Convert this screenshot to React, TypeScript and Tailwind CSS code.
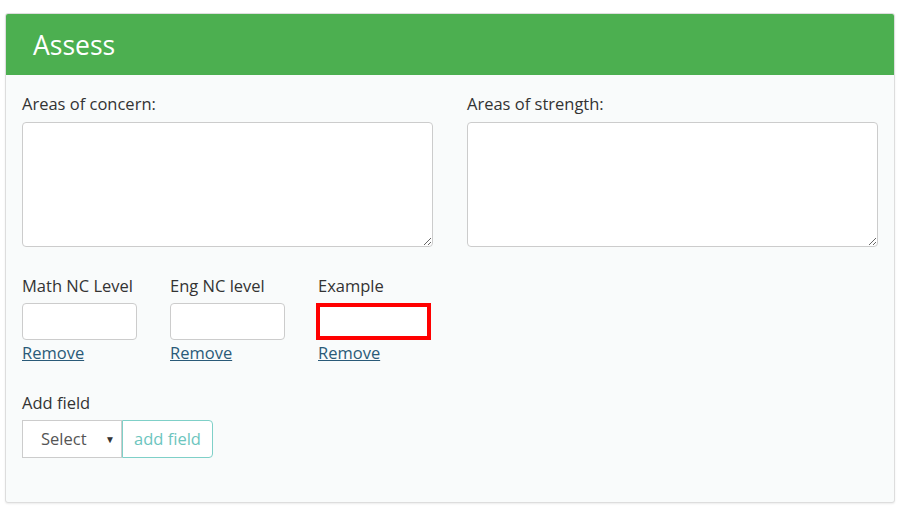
import React from "react";

const font = { fontFamily: '"Open Sans", "Noto Sans", sans-serif' };

function SmallField({ label, red }: { label: string; red?: boolean }) {
  return (
    <div className="flex w-[115px] flex-col">
      <div className="h-[24px] text-[16.5px] leading-[24px] text-[#333]">{label}</div>
      <div className="mt-[5px]">
        {red ? (
          <input className="ml-[-2px] block h-[37px] w-[115px] border-[4px] border-[#ff0000] bg-white outline-none" />
        ) : (
          <input className="block h-[37px] w-[115px] rounded-[4px] border border-[#cccccc] bg-white outline-none" />
        )}
      </div>
      <a href="#" className="mt-[1px] text-[16.5px] leading-[24px] text-[#2a5a78] underline">
        Remove
      </a>
    </div>
  );
}

export default function App() {
  return (
    <div style={font} className="h-[514px] w-[902px] bg-white pt-[13px] pl-[5px]">
      <div className="w-[890px] h-[490px] rounded-[3px] border border-[#dddddd] bg-[#f9fbfb] shadow-[0_1px_2px_rgba(0,0,0,0.08)] overflow-hidden">
        <div className="flex h-[61px] items-center bg-[#4caf50] px-[27px]">
          <h2 className="text-[26.5px] leading-[32px] font-normal text-white">Assess</h2>
        </div>
        <div className="px-[16px] pt-[17px]">
          <div className="grid grid-cols-2 gap-x-[34px]">
            <div className="flex flex-col">
              <label className="text-[16.5px] leading-[24px] text-[#333]">Areas of concern:</label>
              <textarea className="mt-[6px] block h-[125px] w-full resize-y rounded-[4px] border border-[#cccccc] bg-white outline-none" />
            </div>
            <div className="flex flex-col">
              <label className="text-[16.5px] leading-[24px] text-[#333]">Areas of strength:</label>
              <textarea className="mt-[6px] block h-[125px] w-full resize-y rounded-[4px] border border-[#cccccc] bg-white outline-none" />
            </div>
          </div>
          <div className="mt-[27px] flex gap-[33px]">
            <SmallField label="Math NC Level" />
            <SmallField label="Eng NC level" />
            <SmallField label="Example" red />
          </div>
          <div className="mt-[26px] text-[16.5px] leading-[24px] text-[#333]">Add field</div>
          <div className="mt-[5px] flex h-[38px]">
            <div className="flex w-[100px] items-center justify-between border border-[#cccccc] bg-white pl-[18px] pr-[6px] text-[16.5px] text-[#555]">
              <span>Select</span>
              <span className="text-[10px] text-[#333]">▼</span>
            </div>
            <button className="flex w-[91px] items-center justify-center rounded-r-[4px] border border-[#7fd0c8] bg-white text-[16.5px] text-[#6cc5be]">
              add field
            </button>
          </div>
        </div>
      </div>
    </div>
  );
}
